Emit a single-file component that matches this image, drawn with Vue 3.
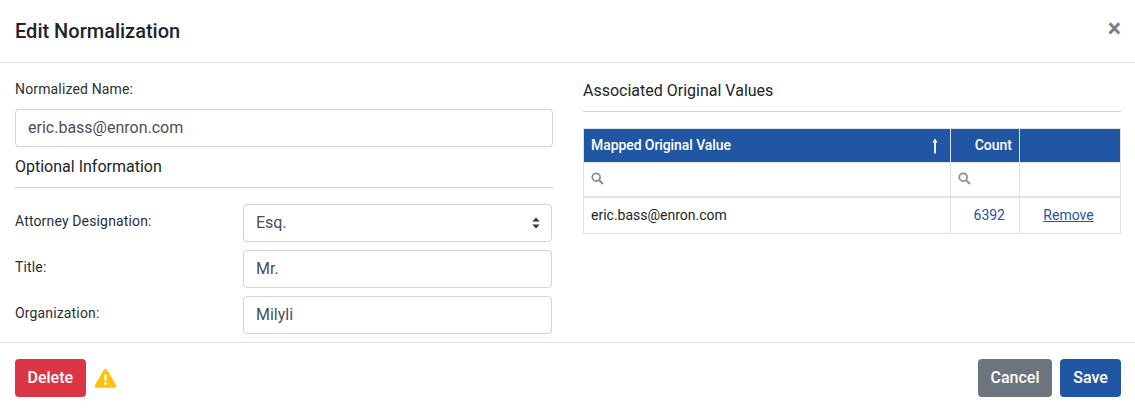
<script setup>
const attorneyOptions = ['Esq.']
const rows = [{ value: 'eric.bass@enron.com', count: 6392 }]
</script>

<template>
  <div class="modal">
    <header class="modal-header">
      <h5>Edit Normalization</h5>
      <span class="close">×</span>
    </header>

    <div class="modal-body">
      <section class="col">
        <label class="name-label">Normalized Name:</label>
        <input class="field" type="text" value="eric.bass@enron.com" />
        <h6 class="optional-title">Optional Information</h6>
        <hr />
        <div class="form-grid">
          <label>Attorney Designation:</label>
          <div class="select-wrap">
            <select class="field">
              <option v-for="opt in attorneyOptions" :key="opt">{{ opt }}</option>
            </select>
            <svg class="carets" width="8" height="12" viewBox="0 0 8 12">
              <path d="M4 0.5 L7.7 4.6 H0.3 Z M4 11.5 L0.3 7.4 H7.7 Z" fill="#343a40" />
            </svg>
          </div>
          <label>Title:</label>
          <input class="field" type="text" value="Mr." />
          <label>Organization:</label>
          <input class="field" type="text" value="Milyli" />
          <div class="fade-line"></div>
        </div>
      </section>

      <section class="col">
        <h6 class="assoc-title">Associated Original Values</h6>
        <hr />
        <table>
          <thead>
            <tr>
              <th class="c-value">
                <div class="th-inner">
                  <span>Mapped Original Value</span>
                  <svg width="6" height="16" viewBox="0 0 6 16">
                    <path d="M3 0.5 L5.6 4.5 H3.9 V15.5 H2.1 V4.5 H0.4 Z" fill="#fff" />
                  </svg>
                </div>
              </th>
              <th class="c-count">Count</th>
              <th class="c-action"></th>
            </tr>
            <tr class="filters">
              <td>
                <svg class="search" width="13" height="13" viewBox="0 0 13 13">
                  <circle cx="5.2" cy="5.2" r="3.9" fill="none" stroke="#868e96" stroke-width="1.7" />
                  <path d="M8.2 8.2 L12 12" stroke="#868e96" stroke-width="2" />
                </svg>
              </td>
              <td>
                <svg class="search" width="13" height="13" viewBox="0 0 13 13">
                  <circle cx="5.2" cy="5.2" r="3.9" fill="none" stroke="#868e96" stroke-width="1.7" />
                  <path d="M8.2 8.2 L12 12" stroke="#868e96" stroke-width="2" />
                </svg>
              </td>
              <td></td>
            </tr>
          </thead>
          <tbody>
            <tr v-for="row in rows" :key="row.value">
              <td>{{ row.value }}</td>
              <td class="count">{{ row.count }}</td>
              <td class="action"><a href="#">Remove</a></td>
            </tr>
          </tbody>
        </table>
      </section>
    </div>

    <footer class="modal-footer">
      <div class="footer-left">
        <button class="btn danger">Delete</button>
        <svg width="23" height="20" viewBox="0 0 23 20">
          <path d="M11.5 1 C12.3 1 12.9 1.4 13.3 2.1 L22 17 C22.7 18.3 21.9 19.8 20.3 19.8 H2.7 C1.1 19.8 0.3 18.3 1 17 L9.7 2.1 C10.1 1.4 10.7 1 11.5 1 Z" fill="#ffc107" />
          <path d="M10.2 6.5 H12.8 L12.4 13 H10.6 Z" fill="#fff" />
          <circle cx="11.5" cy="15.6" r="1.5" fill="#fff" />
        </svg>
      </div>
      <div class="footer-right">
        <button class="btn secondary">Cancel</button>
        <button class="btn primary">Save</button>
      </div>
    </footer>
  </div>
</template>

<style>
html, body {
  background: #fff;
  overflow: hidden;
}
</style>

<style scoped>
.modal {
  width: 1135px;
  height: 416px;
  font-family: Roboto, "Liberation Sans", sans-serif;
  font-size: 14px;
  line-height: 1.5;
  color: #212529;
  background: #fff;
  box-sizing: border-box;
}

.modal-header {
  height: 63px;
  box-sizing: border-box;
  border-bottom: 1px solid #dee2e6;
  display: flex;
  align-items: center;
  justify-content: space-between;
  padding: 0 15px;
}

h5 {
  margin: 0;
  font-size: 20px;
  font-weight: 500;
  line-height: 1.2;
}

.close {
  font-size: 25px;
  font-weight: 700;
  line-height: 1;
  color: #7f7f7f;
  margin-top: -5px;
  margin-right: -1px;
}

.modal-body {
  height: 280px;
  box-sizing: border-box;
  padding: 15px 14px 0 15px;
  display: flex;
  gap: 30px;
  border-bottom: 1px solid #dee2e6;
}

.col {
  flex: 1;
  min-width: 0;
}

label {
  display: block;
  line-height: 21px;
  letter-spacing: 0.15px;
  color: #2b3035;
}

.name-label {
  padding-top: 1px;
  margin-bottom: 9px;
}

.field {
  display: block;
  width: 100%;
  height: 38px;
  box-sizing: border-box;
  padding: 5px 12px 7px;
  border: 1px solid #ced4da;
  border-radius: 4px;
  font: inherit;
  font-size: 16px;
  color: #495057;
  background: #fff;
  outline: none;
  appearance: none;
}

select.field {
  padding: 6px 12px;
}

h6 {
  margin: 0;
  font-size: 16px;
  font-weight: 400;
  line-height: 19px;
}

.optional-title {
  margin-top: 10px;
}

.assoc-title {
  margin-top: 3px;
}

hr {
  margin: 11px 0 16px;
  border: 0;
  border-top: 1px solid #cfd2d6;
}

.form-grid {
  display: grid;
  grid-template-columns: 228px 309px;
  row-gap: 8px;
  padding-right: 1px;
}

.form-grid label {
  padding-top: 7px;
  line-height: 21px;
}

/* faint line just under the last input */
.fade-line {
  grid-column: 2;
  height: 1px;
  margin: -5px 2px 0;
  background: #f3f4f6;
}

.select-wrap {
  position: relative;
}

.carets {
  position: absolute;
  right: 12px;
  top: 13px;
}

table {
  width: 537px;
  border-collapse: collapse;
  table-layout: fixed;
}

th, td {
  border: 1px solid #dee2e6;
  padding: 0 7px;
  box-sizing: border-box;
}

th {
  height: 34px;
  background: #2156a5;
  color: #fff;
  font-weight: 500;
  font-size: 14px;
  text-align: left;
}

.c-value { width: 367px; }
.c-count { width: 69px; text-align: right; }
.c-action { width: 101px; }

.th-inner {
  display: flex;
  align-items: center;
  justify-content: space-between;
  padding-right: 5px;
  letter-spacing: -0.08px;
}

.th-inner svg {
  display: block;
}

.filters td {
  height: 34px;
  border-bottom: 2px solid #dee2e6;
}

.search {
  display: block;
  margin-top: -2px;
}

tbody td {
  height: 37px;
}

.count {
  text-align: right;
  color: #2156a5;
  padding-right: 14px;
}

.action {
  text-align: center;
  padding-right: 10px;
}

.action a {
  color: #2156a5;
  text-decoration: underline;
}

.modal-footer {
  display: flex;
  justify-content: space-between;
  align-items: center;
  padding: 16px 14px 0 15px;
}

.footer-left, .footer-right {
  display: flex;
  align-items: center;
  gap: 8px;
}

.btn {
  height: 38px;
  padding: 0 12.5px;
  border: 0;
  border-radius: 4px;
  color: #fff;
  font: inherit;
  font-size: 16px;
  font-weight: 500;
}

.danger { background: #dc3545; }
.secondary { background: #6c757d; }
.primary { background: #2156a5; min-width: 61px; }
</style>
